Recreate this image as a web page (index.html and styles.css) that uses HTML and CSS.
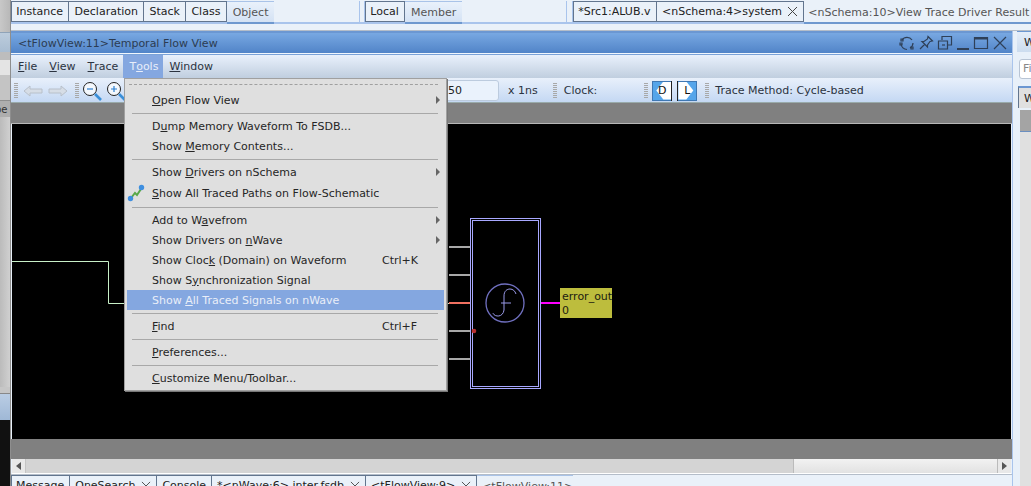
FILE: index.html
```html
<!DOCTYPE html>
<html lang="en">

<head>
  <meta charset="UTF-8">
  <meta name="viewport" content="width=device-width, initial-scale=1.0">
  <title>Temporal Flow View</title>
  <link rel="stylesheet" href="styles.css">
</head>

<body>
  <!-- Left neighbour panel, mostly hidden -->
  <div class="left-strip">
    <div class="ls ls-a"></div>
    <div class="ls ls-blue"></div>
    <div class="ls ls-b"></div>
    <div class="ls ls-white"></div>
    <div class="ls ls-c"></div>
    <div class="ls ls-label">pe</div>
    <div class="ls ls-d"></div>
    <div class="ls ls-e"></div>
    <div class="ls ls-blue2"></div>
    <div class="ls ls-black"></div>
  </div>

  <div class="center">
    <!-- Top tab rows -->
    <div class="top-tabs">
      <div class="tab-pane pane-1">
        <span class="tab">Instance</span><span class="tab">Declaration</span><span class="tab">Stack</span><span class="tab">Class</span><span class="tab off">Object</span>
      </div>
      <div class="tab-pane pane-2">
        <span class="tab">Local</span><span class="tab off">Member</span>
      </div>
      <div class="tab-pane pane-3">
        <span class="tab">*Src1:ALUB.v</span>
        <span class="tab">&lt;nSchema:4&gt;system
          <svg class="x-icon" viewBox="0 0 11 11"><path d="M1 1 10 10M10 1 1 10" /></svg>
        </span>
        <span class="tab off wide">&lt;nSchema:10&gt;View Trace Driver Result</span>
      </div>
    </div>

    <div class="window">
      <div class="titlebar">
        <span class="title">&lt;tFlowView:11&gt;Temporal Flow View</span>
        <div class="win-btns">
          <svg viewBox="0 0 16 16" width="16" height="16"><path d="M3 5A6 6 0 0 1 13 5M14 8A6 6 0 0 1 11 13M8 14.500A6 6 0 0 1 2 9" /><path d="M2 4h2v2H2zM12 12h2v2h-2zM1 8h2v2H1z" /></svg>
          <svg viewBox="0 0 16 16" width="16" height="16"><path d="M10 1.500 14.500 6 12 6.500 9.500 10 9.500 12 4 6.500 6 6.500 9.500 4zM6.500 9.500 2 14" /></svg>
          <svg viewBox="0 0 16 16" width="16" height="16"><path d="M5 5V1.500H14.500V10H11M1.500 6H10.500V14H1.500Z" /><path d="M5 10h3" /></svg>
          <svg viewBox="0 0 14 16" width="14" height="16"><path class="thick" d="M1 14H13" /></svg>
          <svg viewBox="0 0 16 16" width="16" height="16"><path d="M1.500 2.500H14.500V13.500H1.500Z" /><path class="thick" d="M1 3.500H15" /></svg>
          <svg viewBox="0 0 16 16" width="16" height="16"><path d="M2 2 14 14M14 2 2 14" /></svg>
        </div>
      </div>

      <div class="menubar">
        <span class="mb-item"><u>F</u>ile</span>
        <span class="mb-item"><u>V</u>iew</span>
        <span class="mb-item"><u>T</u>race</span>
        <span class="mb-item active">T<u>o</u>ols</span>
        <span class="mb-item"><u>W</u>indow</span>
      </div>

      <div class="toolbar">
        <span class="grip first"></span>
        <svg class="arrow" viewBox="0 0 20 12" width="20" height="12"><path d="M1 6 7 1V4H19V8H7V11Z" /></svg>
        <svg class="arrow next" viewBox="0 0 20 12" width="20" height="12"><path d="M19 6 13 1V4H1V8H13V11Z" /></svg>
        <span class="grip second"></span>
        <svg class="zoom" viewBox="0 0 20 20" width="20" height="20"><circle cx="8" cy="8" r="6.500" /><path class="sign" d="M5 8H11" /><path class="handle" d="M13 13 19 19" /></svg>
        <svg class="zoom in" viewBox="0 0 20 20" width="20" height="20"><circle cx="8" cy="8" r="6.500" /><path class="sign" d="M5 8H11M8 5V11" /><path class="handle" d="M13 13 19 19" /></svg>
        <span class="time-input">50</span>
        <span class="tb-text unit">x 1ns</span>
        <span class="grip third"></span>
        <span class="tb-text clock">Clock:</span>
        <span class="grip fourth"></span>
        <span class="dl-btn left">D</span>
        <span class="dl-btn right">L</span>
        <span class="grip fifth"></span>
        <span class="tb-text method">Trace Method: Cycle-based</span>
      </div>

      <div class="gray-band"></div>

      <!-- Schematic canvas -->
      <div class="canvas">
        <svg class="schematic" width="999" height="315" viewBox="0 0 999 315">
          <path class="wire" d="M0 137.500H96.500V179.500H120" />
          <path class="wire" d="M430 179.500H437" />
          <path class="pin" d="M437 123H458M437 151H458M437 207H458M437 235H458" />
          <path class="pin-red" d="M437 179H458" />
          <rect class="block" x="458.500" y="94.500" width="70" height="170" />
          <rect class="block" x="460.500" y="96.500" width="66" height="166" />
          <circle class="fn-ring" cx="493" cy="179" r="19" />
          <path class="fn" d="M481 189c1 4 10 5 11-3V172c0-5 3-7 6-7 3 0 5 2 6 5M489 179H499" />
          <circle class="dot" cx="462" cy="207" r="2.300" />
          <path class="out" d="M529 179H548" />
        </svg>
        <div class="signal">error_out<br>0</div>
      </div>

      <div class="gray-band bottom"></div>

      <div class="hscroll">
        <span class="sb-btn"><i class="tri-l"></i></span>
        <span class="sb-trough"></span>
        <span class="sb-thumb"></span>
        <span class="sb-btn"><i class="tri-r"></i></span>
      </div>
    </div>

    <div class="bottom-tabs">
      <span class="tab">Message</span>
      <span class="tab">OneSearch <svg class="x-icon" viewBox="0 0 11 11"><path d="M1 1 10 10M10 1 1 10" /></svg></span>
      <span class="tab">Console</span>
      <span class="tab">*&lt;nWave:6&gt; inter.fsdb <svg class="x-icon" viewBox="0 0 11 11"><path d="M1 1 10 10M10 1 1 10" /></svg></span>
      <span class="tab">&lt;tFlowView:9&gt; <svg class="x-icon" viewBox="0 0 11 11"><path d="M1 1 10 10M10 1 1 10" /></svg></span>
      <span class="tab off">&lt;tFlowView:11&gt;</span>
    </div>
  </div>

  <!-- Right neighbour panel, mostly hidden -->
  <div class="right-strip">
    <div class="rs-tab">W</div>
    <div class="rs-input">Fi</div>
    <div class="rs-tab2">W</div>
    <div class="rs-head"></div>
    <div class="rs-list"></div>
  </div>

  <!-- Tools menu, open -->
  <div class="menu">
    <div class="tearoff"></div>
    <div class="item"><span class="label"><u>O</u>pen Flow View</span><i class="sub"></i></div>
    <div class="sep"></div>
    <div class="item"><span class="label">D<u>u</u>mp Memory Waveform To FSDB...</span></div>
    <div class="item"><span class="label">Show <u>M</u>emory Contents...</span></div>
    <div class="sep"></div>
    <div class="item"><span class="label">Show <u>D</u>rivers on nSchema</span><i class="sub"></i></div>
    <div class="item tall">
      <svg class="path-icon" viewBox="0 0 18 18" width="18" height="18">
        <path d="M4 14 8 9 10 11 14 5" />
        <circle cx="3.500" cy="14.500" r="2.700" />
        <circle cx="14.500" cy="3.500" r="2.700" />
      </svg>
      <span class="label"><u>S</u>how All Traced Paths on Flow-Schematic</span>
    </div>
    <div class="sep"></div>
    <div class="item"><span class="label">Add to W<u>a</u>vefrom</span><i class="sub"></i></div>
    <div class="item"><span class="label">Show Drivers on <u>n</u>Wave</span><i class="sub"></i></div>
    <div class="item"><span class="label">Show Cloc<u>k</u> (Domain) on Waveform</span><span class="keys">Ctrl+K</span></div>
    <div class="item"><span class="label">Show S<u>y</u>nchronization Signal</span></div>
    <div class="item selected"><span class="label">Show <u>A</u>ll Traced Signals on nWave</span></div>
    <div class="sep"></div>
    <div class="item"><span class="label"><u>F</u>ind</span><span class="keys">Ctrl+F</span></div>
    <div class="sep"></div>
    <div class="item"><span class="label"><u>P</u>references...</span></div>
    <div class="sep"></div>
    <div class="item"><span class="label"><u>C</u>ustomize Menu/Toolbar...</span></div>
  </div>
</body>

</html>
```

FILE: styles.css
```css
html,
body {
  margin: 0;
  height: 486px;
  overflow: hidden;
}

body {
  display: flex;
  position: relative;
  font-family: "DejaVu Sans", sans-serif;
  font-size: 11px;
  color: #222;
  background: #e8f0f9;
}

u {
  text-underline-offset: 1px;
}

/* left strip */
.left-strip {
  width: 11px;
  flex: none;
  display: flex;
  flex-direction: column;
  border-right: 1px solid #8e8e8e;
  box-sizing: border-box;
  overflow: hidden;
}

.ls { flex: none; }
.ls-a { height: 32px; background: linear-gradient(90deg, #c8c8c8, #b8b8b8); }
.ls-blue { height: 20px; background: linear-gradient(#bcccdc, #a9bdd2); border-top: 1px solid #8fa3b8; box-sizing: border-box; }
.ls-b { height: 8px; background: #bdbdbd; }
.ls-white { height: 15px; background: #e4e4e4; }
.ls-c { height: 25px; background: #c4c4c4; }
.ls-label { height: 17px; line-height: 17px; background: #aeaeae; border-top: 1px solid #8e8e8e; box-sizing: border-box; font-size: 10px; text-indent: -5px; white-space: nowrap; color: #333; }
.ls-d { height: 270px; background: linear-gradient(90deg, #bbb, #d0d0d0); }
.ls-e { height: 7px; background: #c6c6c6; border-bottom: 1px solid #888; box-sizing: border-box; }
.ls-blue2 { height: 26px; background: linear-gradient(#bacde4, #9fb8d6); }
.ls-black { flex: 1; background: #111; }

/* center */
.center {
  width: 1001px;
  flex: none;
  display: flex;
  flex-direction: column;
}

.tab {
  display: inline-flex;
  align-items: center;
  gap: 5px;
  box-sizing: border-box;
  height: 21px;
  padding: 0 5.250px;
  border: 1px solid #62758e;
  border-left-width: 0;
  background: #eaf1f9;
  white-space: nowrap;
  color: #222;
}

.tab:first-child {
  border-left-width: 1px;
  padding-left: 4.250px;
}

.tab.off {
  height: 23px;
  padding: 1px 6px 0;
  border: 0;
  border-top: 1px solid #a9c3e8;
  border-bottom: 2px solid #6e98cf;
  background: linear-gradient(#e9f1fb, #d4e2f4);
  color: #555;
}

.tab.off.wide {
  background: #eaf1f9;
  border-top: 0;
  padding-left: 4px;
}

.x-icon {
  width: 11px;
  height: 11px;
  fill: none;
  stroke: #444;
  stroke-width: 1;
}

.top-tabs {
  width: 1020px;
  height: 31px;
  flex: none;
  display: flex;
  box-sizing: border-box;
  padding-top: 1px;
  position: relative;
  z-index: 1;
  border-bottom: 1px solid #b4bdc9;
  background: linear-gradient(#eaf1f9 22px, #a9c4ec 22px, #a9c4ec 24px, #eaf1f9 24px);
}

.tab-pane {
  display: flex;
  align-items: flex-start;
  height: 23px;
}

.pane-1 { width: 349px; border-right: 1px solid #a9c4ec; box-sizing: border-box; }
.pane-2 { width: 203px; margin-left: 4px; border-left: 1px solid #a9c4ec; box-sizing: border-box; border-right: 1px solid #a9c4ec; }
.pane-3 { flex: 1; margin-left: 5px; border-left: 1px solid #a9c4ec; overflow: hidden; }

/* window */
.window {
  flex: none;
  height: 444px;
  display: flex;
  flex-direction: column;
  box-sizing: border-box;
  border-top: 2px solid #6b97d2;
  border-bottom: 1px solid #b4bdc9;
}

.titlebar {
  height: 20px;
  flex: none;
  display: flex;
  align-items: center;
  justify-content: space-between;
  padding: 0 4px 0 7px;
  background: linear-gradient(#78a8e2, #5184c8);
  border-bottom: 1px solid #f0f6fd;
  box-shadow: 0 1px 0 #7aa2d8;
}

.title {
  color: #2c3c52;
}

.win-btns {
  display: flex;
  gap: 3px;
  align-items: center;
}

.win-btns svg {
  fill: none;
  stroke: #2f4058;
  stroke-width: 1.200;
}

.win-btns svg .thick {
  stroke-width: 2;
}

.menubar {
  height: 23px;
  flex: none;
  margin-top: 1px;
  display: flex;
  align-items: stretch;
  padding-left: 7px;
  background: linear-gradient(#e9f1fc, #c0cedf);
}

.mb-item {
  display: flex;
  align-items: center;
  margin-right: 12px;
  color: #2b3340;
}

.mb-item.active {
  margin: 0 6px 0 -7px;
  padding: 0 5px 0 6px;
  background: #84a7e0;
  color: #e8eefa;
}

.toolbar {
  height: 25px;
  flex: none;
  display: flex;
  align-items: center;
  background: linear-gradient(#e8f0fb, #c4d8f3);
  border-bottom: 1px solid #9aa;
  box-sizing: border-box;
  padding-top: 1px;
}

.grip {
  width: 4px;
  height: 16px;
  flex: none;
  background: repeating-linear-gradient(#a8a8a8 0 1px, transparent 1px 2px);
}

.grip.first { margin-left: 3px; }
.grip.second { margin-left: 7px; }
.grip.third { margin-left: 15px; }
.grip.fourth { margin-left: 47px; }
.grip.fifth { margin-left: 8px; }

.arrow {
  fill: #d6dde6;
  stroke: #b8c0ca;
  margin-left: 5px;
}

.arrow.next { margin-left: 5px; }

.zoom {
  margin-left: 3px;
  fill: #f4f8fd;
  flex: none;
}

.zoom.in { margin-left: 4px; }
.zoom circle { stroke: #222; stroke-width: 1; }
.zoom .sign { stroke: #2a7fd0; stroke-width: 1.200; fill: none; }
.zoom .handle { stroke: #3a8fd8; stroke-width: 2.600; fill: none; }

.time-input {
  flex: none;
  box-sizing: border-box;
  width: 90px;
  height: 21px;
  line-height: 19px;
  margin-left: 283px;
  padding-left: 38px;
  background: #eaf2fc;
  border: 1px solid #bccbde;
  border-radius: 3px;
}

.tb-text {
  flex: none;
  white-space: nowrap;
  color: #2b3340;
}

.unit { margin-left: 9px; }
.clock { margin-left: 7px; }
.method { margin-left: 6px; }

.dl-btn {
  flex: none;
  box-sizing: border-box;
  width: 20px;
  height: 20px;
  line-height: 18px;
  border: 1px solid #3f78b4;
  text-align: center;
  font-size: 11px;
  color: #111;
  background: #55a5ea;
  position: relative;
  isolation: isolate;
}

.dl-btn.left { margin-left: 4px; }
.dl-btn.right { margin-left: 5px; }

/* white arrow plate under the letter */
.dl-btn::before {
  content: "";
  position: absolute;
  inset: 0;
  background: #fff;
  z-index: -1;
}

.dl-btn.left::before { clip-path: polygon(3px 50%, 10px 0, 100% 0, 100% 100%, 10px 100%); }
.dl-btn.right::before { clip-path: polygon(0 0, 8px 0, 15px 50%, 8px 100%, 0 100%); }

.dl-btn::after {
  content: "";
  position: absolute;
  top: -1px;
  bottom: -1px;
  width: 1px;
  background: #222;
}

.dl-btn.left::after { right: -1px; }
.dl-btn.right::after { left: -1px; }

.gray-band {
  height: 21px;
  flex: none;
  background: #808080;
  border-bottom: 1px solid #b8b8b8;
  box-sizing: border-box;
}

.gray-band.bottom {
  height: 20px;
  border-bottom: 0;
}

.canvas {
  flex: 1;
  min-height: 0;
  margin: 0 1px;
  background: #000;
  position: relative;
}

.schematic {
  display: block;
  fill: none;
}

.wire { stroke: #c8f0c8; stroke-width: 1; }
.pin { stroke: #a8a8a8; stroke-width: 2; }
.pin-red { stroke: #f07060; stroke-width: 2; }
.block { stroke: #a8a8ff; stroke-width: 1; }
.fn-ring { stroke: #7070c0; stroke-width: 1.300; }
.fn { stroke: #9a9ae8; stroke-width: 1; }
.dot { fill: #b83030; }
.out { stroke: #ff00ff; stroke-width: 2; }

.signal {
  position: absolute;
  left: 548px;
  top: 164px;
  width: 52px;
  height: 30px;
  overflow: hidden;
  background: #bdbd3d;
  color: #1c1c10;
  line-height: 14px;
  padding: 2px 0 0 2px;
  box-sizing: border-box;
  white-space: nowrap;
}

.hscroll {
  height: 14px;
  flex: none;
  margin: 0 1px;
  display: flex;
  border-bottom: 1px solid #fff;
  box-sizing: content-box;
}

.sb-btn {
  width: 14px;
  flex: none;
  display: flex;
  align-items: center;
  justify-content: center;
  background: #e8e8e8;
  border-right: 1px solid #c4c4c4;
  box-sizing: border-box;
}

.sb-btn:last-child {
  border-right: 0;
  border-left: 1px solid #bbb;
}

.sb-trough {
  width: 767px;
  flex: none;
  background: #d4d4d4;
}

.sb-thumb {
  flex: 1;
  background: linear-gradient(#f2f2f2, #e2e2e2);
  border-left: 1px solid #bbb;
}

.tri-l,
.tri-r {
  width: 0;
  height: 0;
  border-top: 4px solid transparent;
  border-bottom: 4px solid transparent;
}

.tri-l { border-right: 5px solid #555; }
.tri-r { border-left: 5px solid #555; }

.bottom-tabs {
  flex: 1;
  display: flex;
  align-items: flex-start;
  background: #eaf1f9;
  height: 11px;
}

.bottom-tabs .tab {
  border-top: 1px solid #62758e;
  height: 21px;
  flex: none;
  gap: 6px;
  padding: 0 5px;
}

.bottom-tabs .tab:first-child {
  padding-left: 4px;
}

.bottom-tabs .x-icon {
  width: 10px;
  height: 10px;
}

.bottom-tabs .tab.off {
  border-bottom: 0;
  border-top-color: #a9c3e8;
  background: #eaf1f9;
  padding: 0 0 0 5px;
}

/* right strip */
.right-strip {
  flex: 1;
  min-width: 0;
  box-sizing: border-box;
  padding-left: 4px;
  border-left: 1px solid #a9c4ec;
  display: flex;
  flex-direction: column;
  background: #e8f0f9;
  overflow: hidden;
  position: relative;
}

.rs-tab {
  margin-top: 31px;
  height: 21px;
  line-height: 21px;
  padding-left: 7px;
  background: linear-gradient(#e4edf9, #ccdcef);
  border-top: 1px solid #6b97d2;
  box-sizing: border-box;
}

.rs-input {
  margin: 7px 0 0 2px;
  height: 20px;
  width: 30px;
  line-height: 18px;
  padding-left: 3px;
  border: 1px solid #b8c4d4;
  border-radius: 3px;
  background: #fff;
  color: #888;
  box-sizing: border-box;
}

.rs-tab2 {
  margin: 7px 0 0 1px;
  height: 22px;
  line-height: 22px;
  padding-left: 5px;
  background: #e0e0e0;
  border-top: 2px solid #6b97d2;
  border-left: 1px solid #62758e;
  box-sizing: border-box;
}

.rs-head {
  margin: 2px 0 0 3px;
  height: 22px;
  background: #a4a4a4;
  border-bottom: 1px solid #6b8fc0;
  box-sizing: border-box;
}

.rs-list {
  flex: 1;
  margin-left: 3px;
  background: #e0e0e0;
}

/* tools menu */
.menu {
  position: absolute;
  left: 124px;
  top: 78px;
  z-index: 2;
  width: 323px;
  height: 313px;
  box-sizing: border-box;
  background: #dfdfdf;
  border: 1px solid #a0a0a0;
  box-shadow: 1px 1px 0 #777;
  color: #262626;
}

.tearoff {
  height: 11px;
  margin: 0 8px 0 4px;
  box-sizing: border-box;
  border-bottom: 1px dashed #a0a0a0;
  transform: translateY(-5px);
}

.item {
  height: 20px;
  display: flex;
  align-items: center;
  margin: 0 2px;
  padding-left: 25px;
  position: relative;
}

.item.tall {
  height: 22px;
}

.item.selected {
  background: #84a7e0;
  color: #e9eef8;
}

.label {
  width: 230px;
  flex: none;
  white-space: nowrap;
}

.sub {
  position: absolute;
  right: 4px;
  top: 6px;
  width: 0;
  height: 0;
  border-top: 4px solid transparent;
  border-bottom: 4px solid transparent;
  border-left: 4px solid #666;
}

.sep {
  height: 6px;
  margin: 0 8px 0 7px;
  box-sizing: border-box;
  background: linear-gradient(#a8a8a8, #a8a8a8) center / 100% 1px no-repeat;
}

.path-icon {
  position: absolute;
  left: 0;
  top: 2px;
  fill: #3f8fe0;
}

.path-icon path {
  fill: none;
  stroke: #58a848;
  stroke-width: 2;
}
```
